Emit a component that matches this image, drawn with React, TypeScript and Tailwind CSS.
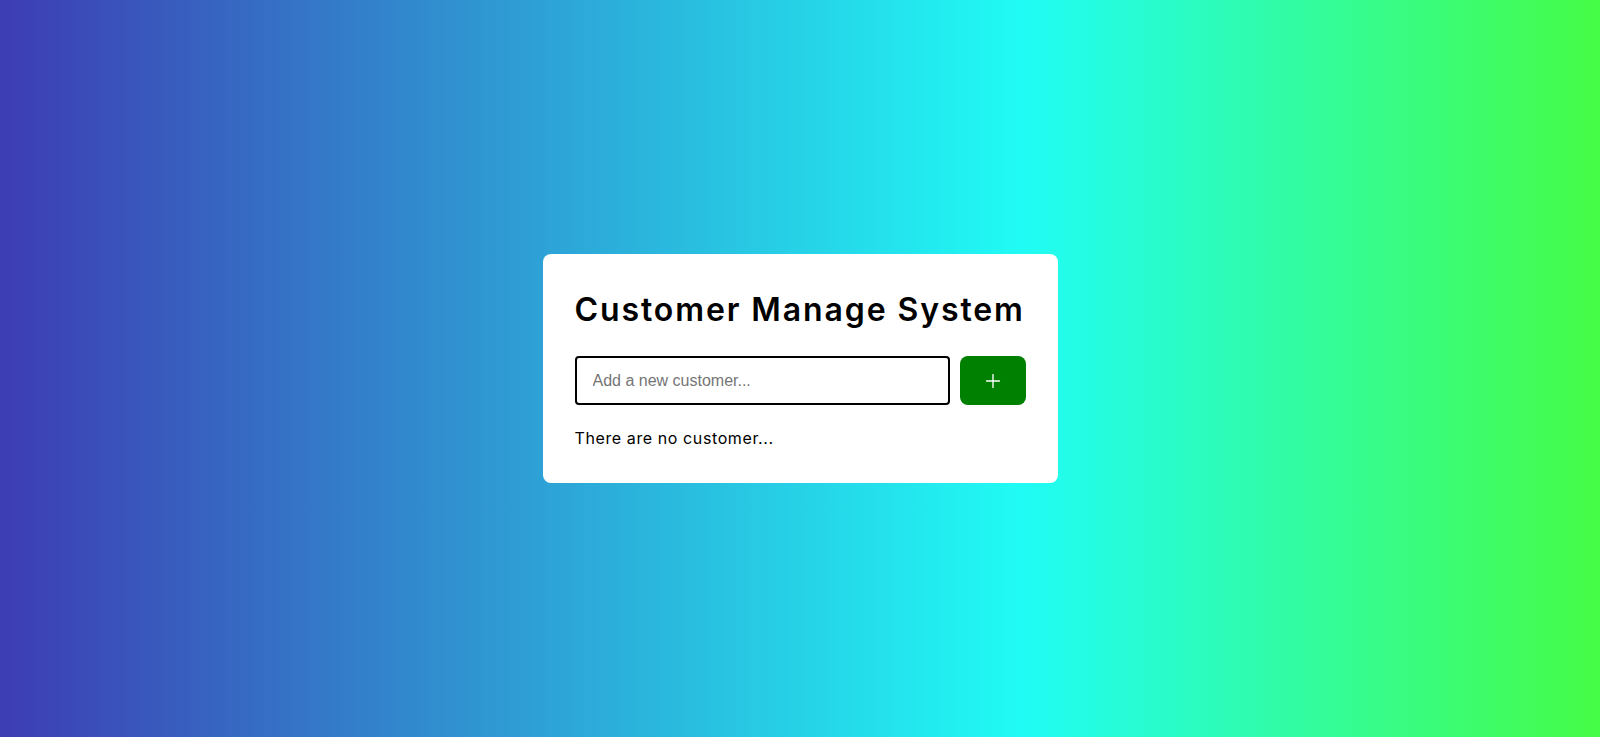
import { Plus } from 'lucide-react';

export default function App() {
  return (
    <div className="flex h-[737px] w-full items-center justify-center bg-[linear-gradient(90deg,#3d3cb3_0%,#20fcf5_64%,#45fc45_100%)] font-['Inter',sans-serif]">
      <div className="w-[515px] rounded-lg bg-white px-8 pt-8 pb-[33px]">
        <h1 className="whitespace-nowrap text-[32px] leading-[48px] font-semibold tracking-[1.9px] text-black">Customer Manage System</h1>
        <form className="mt-[22px] flex h-[49px] gap-[10px]" onSubmit={(e) => e.preventDefault()}>
          <input
            type="text"
            placeholder="Add a new customer..."
            className="min-w-0 flex-1 rounded-[4px] border-2 border-black px-4 font-['Liberation_Sans',sans-serif] text-base text-black placeholder:text-[#757575] outline-none"
          />
          <button type="submit" className="flex w-[66px] items-center justify-center rounded-lg bg-[#008000] text-white">
            <Plus size={22} strokeWidth={1.5} />
          </button>
        </form>
        <p className="mt-[21px] text-base leading-6 tracking-[0.6px] text-black">There are no customer...</p>
      </div>
    </div>
  );
}
